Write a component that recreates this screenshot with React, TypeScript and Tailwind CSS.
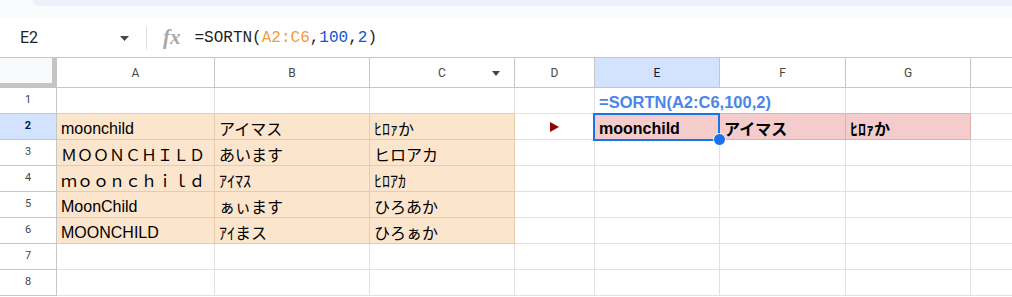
type Cell = { text?: string; jp?: boolean; bold?: boolean; marker?: boolean };

const COLS = [
  { key: "A", w: "w-[158px]" },
  { key: "B", w: "w-[155px]" },
  { key: "C", w: "w-[145px]" },
  { key: "D", w: "w-[80px]" },
  { key: "E", w: "w-[125px]" },
  { key: "F", w: "w-[126px]" },
  { key: "G", w: "w-[125px]" },
];

const ROWS: Cell[][] = [
  [{}, {}, {}, {}, {}, {}, {}],
  [
    { text: "moonchild" },
    { text: "アイマス", jp: true },
    { text: "ﾋﾛｧか", jp: true },
    { marker: true },
    { text: "moonchild", bold: true },
    { text: "アイマス", jp: true, bold: true },
    { text: "ﾋﾛｧか", jp: true, bold: true },
  ],
  [
    { text: "ＭＯＯＮＣＨＩＬＤ", jp: true },
    { text: "あいます", jp: true },
    { text: "ヒロアカ", jp: true },
    {},
    {},
    {},
    {},
  ],
  [
    { text: "ｍｏｏｎｃｈｉｌｄ", jp: true },
    { text: "ｱｲﾏｽ", jp: true },
    { text: "ﾋﾛｱｶ", jp: true },
    {},
    {},
    {},
    {},
  ],
  [
    { text: "MoonChild" },
    { text: "ぁぃます", jp: true },
    { text: "ひろあか", jp: true },
    {},
    {},
    {},
    {},
  ],
  [
    { text: "MOONCHILD" },
    { text: "ｱｲまス", jp: true },
    { text: "ひろぁか", jp: true },
    {},
    {},
    {},
    {},
  ],
  [{}, {}, {}, {}, {}, {}, {}],
  [{}, {}, {}, {}, {}, {}, {}],
];

function cellClasses(r: number, c: number) {
  // r is the 1-based row number, c the 0-based column index
  const orange = r >= 2 && r <= 6 && c <= 2;
  const pink = r === 2 && c >= 4 && c <= 6;
  let bg = "bg-white";
  let right = "border-r-[#e1e1e1]";
  let bottom = "border-b-[#e1e1e1]";
  if (orange) {
    bg = "bg-[#fce5cd]";
    right = "border-r-[#e8cba9]";
    bottom = "border-b-[#e8cba9]";
  }
  if (pink) {
    bg = "bg-[#f4cccc]";
    right = "border-r-[#dfb0b0]";
    bottom = "border-b-[#dfb0b0]";
  }
  if (r === 1 && c <= 2) bottom = "border-b-[#e8cba9]";
  if (r === 1 && c >= 4 && c <= 6) bottom = "border-b-[#dfb0b0]";
  if (r === 2 && c === 3) right = "border-r-[#dfb0b0]";
  if (r === 1 && c === 4) right = "border-r-transparent";
  return `${bg} ${right} ${bottom}`;
}

function textClasses(cell: Cell) {
  const weight = cell.bold ? "font-bold" : "";
  if (cell.jp) {
    return `font-['Noto_Sans_CJK_JP',sans-serif] text-[16px] leading-[19px] text-black ${weight}`;
  }
  return `text-[16px] leading-[19px] text-black ${weight}`;
}

function DataCell({ cell, r, c }: { cell: Cell; r: number; c: number }) {
  const col = COLS[c];
  const selected = r === 2 && c === 4;
  const spill = r === 1 && c === 4;
  return (
    <div
      className={`relative flex h-[26px] shrink-0 items-end border-r border-b pb-[1px] pl-[4px] whitespace-nowrap ${col.w} ${cellClasses(r, c)} ${
        spill || selected ? "z-10 overflow-visible" : "overflow-hidden"
      }`}
    >
      {spill ? (
        <span className="text-[16.5px] leading-[20px] font-bold text-[#4a86e8]">
          =SORTN(A2:C6,100,2)
        </span>
      ) : null}
      {cell.marker ? (
        <svg width="9" height="10" viewBox="0 0 9 10" className="mb-[6px] ml-[31px]">
          <polygon points="0,0 9,5 0,10" fill="#990000" />
        </svg>
      ) : null}
      {cell.text ? <span className={textClasses(cell)}>{cell.text}</span> : null}
      {selected ? (
        <>
          <div className="pointer-events-none absolute top-[-1px] left-[-2px] h-[28px] w-[127px] border-2 border-[#1a73e8]" />
          <div className="absolute right-[-7px] bottom-[-7px] h-[13px] w-[13px] rounded-full border-[1.5px] border-white bg-[#1a73e8]" />
        </>
      ) : null}
    </div>
  );
}

export default function App() {
  return (
    <div className="h-[297px] w-[1012px] overflow-hidden bg-white font-['Liberation_Sans','Noto_Sans_CJK_JP',sans-serif]">
      {/* top strip */}
      <div className="h-[18px] bg-[#f9fbfd]">
        <div className="ml-[33px] h-[6px] rounded-bl-[10px] bg-[#edf2fa]" />
      </div>

      {/* formula bar */}
      <div className="flex h-[40px] items-center border-b border-[#c4c7c5] bg-white">
        <div className="flex w-[146px] items-center pl-[20px]">
          <span className="font-['Roboto',sans-serif] text-[16px] text-[#1f1f1f]">E2</span>
          <svg width="9" height="5" viewBox="0 0 9 5" className="mt-[1px] ml-[82px]">
            <polygon points="0,0 9,0 4.5,5" fill="#444746" />
          </svg>
        </div>
        <div className="h-[22px] w-px bg-[#dadce0]" />
        <span className="ml-[16px] font-['Liberation_Serif',serif] text-[21px] leading-none font-bold text-[#a8a8a8] italic">
          fx
        </span>
        <span className="ml-[14px] font-['Liberation_Mono',monospace] text-[16px] leading-none text-[#1f1f1f]">
          =SORTN(<span className="text-[#f09d3f]">A2:C6</span>,
          <span className="text-[#1155cc]">100</span>,
          <span className="text-[#1155cc]">2</span>)
        </span>
      </div>

      {/* column headers */}
      <div className="flex h-[30px]">
        <div className="h-[30px] w-[57px] shrink-0 border-r-[5px] border-b-[5px] border-[#c4c4c4] bg-[#f8f9fa]" />
        {COLS.map((col) => (
          <div
            key={col.key}
            className={`relative flex shrink-0 items-center justify-center border-r border-b border-[#c4c7c5] font-['Roboto',sans-serif] text-[12px] ${col.w} ${
              col.key === "E" ? "bg-[#d3e3fd] text-[#041e49]" : "bg-white text-[#444746]"
            }`}
          >
            {col.key}
            {col.key === "C" ? (
              <svg width="8" height="5" viewBox="0 0 8 5" className="absolute top-[13px] right-[14px]">
                <polygon points="0,0 8,0 4,5" fill="#444746" />
              </svg>
            ) : null}
          </div>
        ))}
        <div className="flex-1 border-b border-[#c4c7c5] bg-white" />
      </div>

      {/* rows */}
      {ROWS.map((row, i) => {
        const r = i + 1;
        return (
          <div key={r} className="flex h-[26px]">
            <div
              className={`flex h-[26px] w-[57px] shrink-0 items-center justify-center border-r border-b border-[#c4c7c5] font-['Roboto',sans-serif] text-[11px] ${
                r === 2 ? "bg-[#d3e3fd] font-bold text-[#041e49]" : "bg-white text-[#444746]"
              }`}
            >
              {r}
            </div>
            {row.map((cell, c) => (
              <DataCell key={c} cell={cell} r={r} c={c} />
            ))}
            <div className="h-[26px] flex-1 border-b border-[#e1e1e1] bg-white" />
          </div>
        );
      })}
    </div>
  );
}
